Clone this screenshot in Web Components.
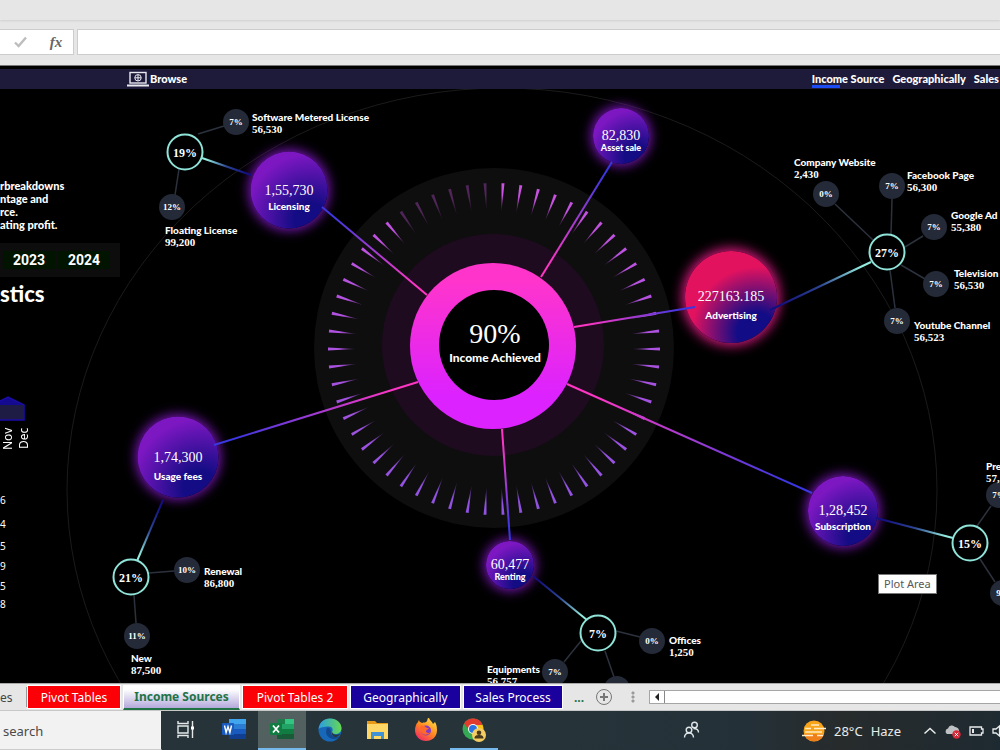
<!DOCTYPE html>
<html lang="en">
<head>
<meta charset="utf-8">
<title>Income Sources</title>
<style>
  body {
    margin: 0;
    height: 100vh;
    display: flex;
    flex-direction: column;
    overflow: hidden;
    background: #000;
    font-family: "Noto Sans", "Open Sans", sans-serif;
  }
  income-board { flex: 1; min-height: 0; }
</style>
</head>
<body>
<formula-bar></formula-bar>
<income-board>
  <board-nav slot="nav"></board-nav>
  <side-panel slot="panel"></side-panel>
  <income-map slot="map"></income-map>
</income-board>
<sheet-tabs></sheet-tabs>
<task-bar></task-bar>

<script>
function mount(el, html) {
  el.attachShadow({ mode: "open" }).innerHTML = html;
}

class FormulaBar extends HTMLElement {
  connectedCallback() {
    mount(this, `
      <style>
        :host { display: block; background: #e6e6e6; border-bottom: 1px solid #777; }
        .ribbon { height: 20px; box-shadow: 0 1px 2px #cfcfcf; }
        .row { display: flex; gap: 3px; padding: 9px 0 10px; }
        .tools {
          box-sizing: border-box; width: 74px; height: 26px;
          display: flex; align-items: center; justify-content: flex-end; gap: 16px;
          padding-right: 7px; background: #fff; border: 1px solid #cdcdcd; border-left: 0;
        }
        button {
          border: 0; padding: 0; background: none; width: 20px; height: 20px;
          font: italic bold 15px/20px "Liberation Serif", serif; color: #666;
        }
        button svg { display: block; margin: 4px; }
        input {
          flex: 1; min-width: 0; box-sizing: border-box; height: 26px;
          border: 1px solid #cdcdcd; border-right: 0; background: #fff; padding: 0 8px;
        }
      </style>
      <div class="ribbon"></div>
      <div class="row">
        <div class="tools">
          <button aria-label="Enter"><svg width="13" height="12" viewBox="0 0 13 12"><path d="M1 6.5 4.6 10 12 1.5" fill="none" stroke="#bdbdbd" stroke-width="2.4"/></svg></button>
          <button aria-label="Insert function">fx</button>
        </div>
        <input aria-label="Formula">
      </div>
    `);
  }
}

class IncomeBoard extends HTMLElement {
  connectedCallback() {
    mount(this, `
      <style>
        :host { display: flex; flex-direction: column; background: #000; color: #fff; padding-top: 3px; }
        .stage { flex: 1; min-height: 0; display: grid; overflow: hidden; }
        ::slotted([slot="map"]), ::slotted([slot="panel"]) { grid-area: 1 / 1; }
        ::slotted([slot="panel"]) { justify-self: start; }
      </style>
      <slot name="nav"></slot>
      <div class="stage">
        <slot name="map"></slot>
        <slot name="panel"></slot>
      </div>
    `);
  }
}

class BoardNav extends HTMLElement {
  connectedCallback() {
    mount(this, `
      <style>
        :host {
          display: flex; align-items: center; height: 20px; padding-left: 127px;
          background: #1e1b3a; font: 900 11px/18px Lato, sans-serif; overflow: hidden;
        }
        a { color: #fff; text-decoration: none; white-space: nowrap; }
        .browse { display: flex; align-items: center; }
        nav { display: flex; gap: 8px; margin-left: auto; padding-right: 1px; }
        .active { background: linear-gradient(#1d4df2, #1d4df2) left bottom / 28px 3px no-repeat; }
      </style>
      <a class="browse" href="#">
        <svg width="23" height="16" viewBox="0 0 23 16" fill="none" stroke="#e8e8f0">
          <rect x="3" y="1.5" width="16" height="10.5" stroke-width="1.4"/>
          <path d="M0 14.5h22" stroke-width="2"/>
          <circle cx="11" cy="6.8" r="3.2"/><path d="M7.8 6.8h6.4M11 3.6v6.4"/>
        </svg>
        Browse
      </a>
      <nav>
        <a class="active" href="#">Income Source</a>
        <a href="#">Geographically</a>
        <a href="#">Sales</a>
      </nav>
    `);
  }
}

class SidePanel extends HTMLElement {
  connectedCallback() {
    mount(this, `
      <style>
        :host { display: block; width: 120px; padding-top: 90px; font-family: Lato, sans-serif; }
        p { margin: 0; font-weight: 900; font-size: 11px; line-height: 13px; white-space: nowrap; }
        .years {
          display: flex; gap: 3px; align-items: center; margin-top: 12px; height: 34px;
          padding-left: 3px; background: #0d0d0d;
        }
        .years button {
          width: 52px; height: 18px; border: 0; padding: 0; background: #001400; color: #fff;
          font: bold 14px/18px Roboto, sans-serif;
        }
        h2 { margin: 2px 0 0; font-size: 22px; line-height: 30px; font-weight: 900; }
        .trend { margin-top: 87px; display: block; }
        .months { display: flex; margin-top: 6px; font: 12px/16px "Noto Sans", sans-serif; }
        .months span { writing-mode: vertical-rl; transform: rotate(180deg); height: 24px; text-align: right; }
        ul {
          list-style: none; margin: 41px 0 0; padding: 0; font: 10px/14px "Noto Sans", sans-serif;
          display: grid; grid-template-rows: 24px 22px 20px 20px 18px 18px;
        }
      </style>
      <p>rbreakdowns<br>ntage and<br>rce.<br>ating profit.</p>
      <div class="years"><button>2023</button><button>2024</button></div>
      <h2>stics</h2>
      <svg class="trend" width="26" height="26" viewBox="0 0 26 26">
        <path d="M0 5 8 1l16 8v15H0z" fill="#1e1b45"/>
        <path d="M0 5 8 1l16 8H0z" fill="#130a8f"/>
        <path d="M0 5 8 1l16 8v15H0" fill="none" stroke="#1b0ca8" stroke-width="1.5"/>
      </svg>
      <div class="months"><span>Nov</span><span>Dec</span></div>
      <ul><li>6</li><li>4</li><li>5</li><li>9</li><li>5</li><li>8</li></ul>
    `);
  }
}

// a glowing income bubble: amount in the middle, name under it
class IncomeBubble extends HTMLElement {
  connectedCallback() {
    mount(this, `
      <style>
        :host {
          position: absolute; transform: translate(-50%, -50%);
          box-sizing: border-box; border-radius: 50%;
          display: grid; grid-template-rows: 1fr auto 1fr; justify-items: center;
          background: radial-gradient(circle at 78% 88%, #140c84 18%, #7c17c2 72%);
          box-shadow: 0 0 12px 2px #7a16b8; white-space: nowrap;
        }
        :host([hot]) {
          background: radial-gradient(circle at 78% 88%, #120c86 18%, #e2125f 60%);
          box-shadow: 0 0 12px 3px #d0187c;
        }
        .amount { grid-row: 2; font: 14px/18px "Liberation Serif", serif; }
        .name { grid-row: 3; font: 900 10px/12px Lato, sans-serif; }
        :host([small]) .amount { line-height: 14px; }
        :host([small]) .name { font-size: 9px; line-height: 10px; }
        :host([roomy]) .name { padding-top: 3px; }
      </style>
      <span class="amount"><slot></slot></span>
      <span class="name">${this.getAttribute("name")}</span>
    `);
  }
}

class ShareNode extends HTMLElement {
  connectedCallback() {
    mount(this, `
      <style>
        :host {
          position: absolute; transform: translate(-50%, -50%);
          box-sizing: border-box; width: 26px; height: 26px; border-radius: 50%;
          display: grid; place-items: center; background: #242a37;
          font: bold 9px/12px "Liberation Serif", serif;
        }
        :host([hub]) { width: 37px; height: 37px; border: 2px solid #8fe3d8; background: #000; font-size: 12px; }
      </style>
      <slot></slot>
    `);
  }
}

class SourceLabel extends HTMLElement {
  connectedCallback() {
    mount(this, `
      <style>
        :host { position: absolute; white-space: nowrap; font: 900 10px/12px Lato, sans-serif; }
        .value { display: block; font: bold 11px/12px "Liberation Serif", serif; }
      </style>
      <span>${this.getAttribute("name")}</span>
      <span class="value"><slot></slot></span>
    `);
  }
}

// the map's plane starts this far down the window
const TOP = 89;

const BUBBLES = [
  [289, 190, 77, "Licensing", "1,55,730", ""],
  [621, 136, 56, "Asset sale", "82,830", "small"],
  [731, 297, 92, "Advertising", "227163.185", "hot roomy"],
  [843, 511, 70, "Subscription", "1,28,452", ""],
  [510, 565, 48, "Renting", "60,477", "small"],
  [178, 457, 81, "Usage fees", "1,74,300", "roomy"],
];

const HUBS = [
  [185, 152, "19%"], [887, 252, "27%"], [131, 577, "21%"], [598, 633, "7%"], [970, 543, "15%"],
];

const LEAVES = [
  [236, 122, "7%"], [172, 207, "12%"], [826, 194, "0%"], [892, 186, "7%"], [934, 227, "7%"],
  [936, 284, "7%"], [897, 321, "7%"], [187, 570, "10%"], [137, 636, "11%"], [652, 641, "0%"],
  [555, 672, "7%"], [617, 689, ""], [999, 495, "7%"], [1003, 593, "9%"],
];

const LABELS = [
  [252, 111, "Software Metered License", "56,530"],
  [165, 224, "Floating License", "99,200"],
  [794, 156, "Company Website", "2,430"],
  [907, 169, "Facebook Page", "56,300"],
  [951, 209, "Google Ad", "55,380"],
  [954, 267, "Television .", "56,530"],
  [914, 319, "Youtube Channel", "56,523"],
  [204, 565, "Renewal", "86,800"],
  [131, 652, "New", "87,500"],
  [669, 634, "Offices", "1,250"],
  [487, 663, "Equipments", "56,757"],
  [986, 460, "Pre", "57,"],
];

const SPOKES = [
  [427, 295, 322, 207], [541, 277, 612, 162], [574, 327, 695, 307],
  [567, 384, 812, 493], [502, 429, 510, 540], [418, 382, 214, 445],
];

const BRANCHES = [
  [251, 175, 202, 158], [770, 310, 871, 262], [876, 518, 953, 538],
  [533, 576, 587, 620], [163, 500, 137, 561],
];

const TWIGS = [
  [198, 134, 224, 126], [179, 169, 175, 195], [873, 240, 835, 204], [891, 235, 892, 199],
  [905, 247, 923, 236], [901, 265, 925, 279], [890, 270, 895, 308], [149, 573, 174, 571],
  [134, 595, 136, 623], [616, 631, 640, 637], [581, 641, 564, 662], [605, 651, 614, 677],
  [977, 526, 991, 506], [980, 559, 995, 582],
];

class IncomeMap extends HTMLElement {
  connectedCallback() {
    mount(this, `
      <style>
        :host { display: block; position: relative; overflow: hidden; }
        svg { position: absolute; inset: 0; width: 100%; height: 100%; }
        .total {
          position: absolute; left: 495px; top: 230px; transform: translateX(-50%);
          text-align: center; white-space: nowrap;
        }
        .total b { display: block; font: 28px/30px "Liberation Serif", serif; }
        .total span { display: block; font: 900 12px/18px Lato, sans-serif; }
        .tip {
          position: absolute; left: 878px; top: 485px; padding: 0 5px;
          font-size: 11px; line-height: 18px; color: #575757; background: #fff; border: 1px solid #767676;
        }
      </style>
      <svg>
        <defs>
          <linearGradient id="ring" x1="0" y1="0" x2="0" y2="1">
            <stop offset=".1" stop-color="#ff35cb"/><stop offset=".8" stop-color="#dc22ff"/>
          </linearGradient>
        </defs>
        <g transform="translate(0 ${-TOP})">
          <ellipse cx="502" cy="490" rx="435" ry="402" fill="none" stroke="#1b1b1b"/>
          <circle cx="494" cy="348" r="180" fill="#0e0e0e"/>
          <circle cx="493" cy="345" r="111" fill="#1f0b20"/>
          ${this.ticks()}
          <circle cx="493" cy="346" r="83" fill="url(#ring)"/>
          <circle cx="494" cy="345" r="55" fill="#000"/>
        </g>
      </svg>
      ${BUBBLES.map(([x, y, d, name, value, flags]) =>
        `<income-bubble ${flags} name="${name}" style="left:${x}px;top:${y - TOP}px;width:${d}px;height:${d}px">${value}</income-bubble>`).join("")}
      <svg>
        <g transform="translate(0 ${-TOP})">
          ${TWIGS.map(([a, b, c, d]) => `<path d="M${a} ${b}L${c} ${d}" stroke="#2c323d" stroke-width="1.5"/>`).join("")}
          ${SPOKES.map((p, i) => this.line(p, "s" + i, ["#ff36c4", "#a23bd0", "#3a36e0"], 2)).join("")}
          ${BRANCHES.map((p, i) => this.line(p, "b" + i, ["#130f80", "#2c4592", "#93ecdf"], 2)).join("")}
        </g>
      </svg>
      ${HUBS.map(([x, y, t]) => `<share-node hub style="left:${x}px;top:${y - TOP}px">${t}</share-node>`).join("")}
      ${LEAVES.map(([x, y, t]) => `<share-node style="left:${x}px;top:${y - TOP}px">${t}</share-node>`).join("")}
      ${LABELS.map(([x, y, name, value]) =>
        `<source-label name="${name}" style="left:${x}px;top:${y - TOP}px">${value}</source-label>`).join("")}
      <div class="total"><b>90%</b><span>Income Achieved</span></div>
      <div class="tip" role="tooltip">Plot Area</div>
    `);
  }

  line([x1, y1, x2, y2], id, [from, mid, to], width) {
    return `
      <linearGradient id="${id}" gradientUnits="userSpaceOnUse" x1="${x1}" y1="${y1}" x2="${x2}" y2="${y2}">
        <stop offset=".1" stop-color="${from}"/><stop offset=".5" stop-color="${mid}"/><stop offset=".9" stop-color="${to}"/>
      </linearGradient>
      <path d="M${x1} ${y1}L${x2} ${y2}" stroke="url(#${id})" stroke-width="${width}"/>`;
  }

  // wedge marks round the dial; the last few before noon are unlit
  ticks() {
    let out = `
      <radialGradient id="fade" gradientUnits="userSpaceOnUse" cx="0" cy="0" r="166">
        <stop offset=".84" stop-color="#fff" stop-opacity=".25"/><stop offset=".93" stop-color="#fff"/>
      </radialGradient>
      <mask id="dial" maskUnits="userSpaceOnUse" x="-170" y="-170" width="340" height="340">
        <circle r="168" fill="url(#fade)"/>
      </mask>
      <g transform="translate(494 349)" mask="url(#dial)">`;
    const count = 58;
    for (let i = 0; i < count; i++) {
      const angle = (i * 360) / count;
      const up = Math.sin((angle * Math.PI) / 180);
      const hue = 278 + up * 12;
      const unlit = i >= 15 && i <= 20;
      out += `<path transform="rotate(${-angle})" d="M138 0 166-1.5v3z" fill="hsl(${hue} 70% 60%)" opacity="${unlit ? 0.35 : 1}"/>`;
    }
    return out + "</g>";
  }
}

class SheetTabs extends HTMLElement {
  connectedCallback() {
    mount(this, `
      <style>
        :host {
          display: flex; align-items: center; box-sizing: border-box; height: 28px; overflow: hidden;
          background: #e6e6e6; border-top: 1px solid #a8a8a8; border-bottom: 1px solid #c8c8c8;
          font-size: 12px;
        }
        button { border: 0; padding: 0; background: none; font: inherit; color: inherit; white-space: nowrap; }
        .tab { height: 24px; box-sizing: border-box; border: 1px solid #fff; color: #fff; margin-right: 2px; text-align: center; }
        .cut { width: 27px; color: #444; text-align: left; height: 20px; border-right: 1px solid #999; }
        .red { background: #fb0007; width: 94px; }
        .red.wide { width: 106px; }
        .blue { background: #1a009c; width: 111px; }
        .blue.last { width: 100px; }
        .on {
          width: 117px; height: 25px; color: #217346; font-weight: bold; margin-right: 2px;
          background: linear-gradient(#fff 15%, #b4a9dc); border: 1px solid #fff; border-bottom: 2px solid #217346;
          box-sizing: border-box;
        }
        .more { color: #217346; font-weight: bold; width: 24px; margin-left: 2px; }
        .add { width: 18px; height: 18px; margin: 0 18px 0 4px; }
        .grip { width: 4px; height: 12px; background: radial-gradient(circle, #999 1px, transparent 2px) 0 0 / 4px 4px; }
        .scroll { flex: 1; display: flex; height: 12px; margin-left: 14px; border: 1px solid #a5a5a5; border-right: 0; background: #fff; }
        .scroll button { width: 15px; border-right: 1px solid #888; }
        svg { display: block; }
      </style>
      <button class="cut">es</button>
      <button class="tab red">Pivot Tables</button>
      <button class="on">Income Sources</button>
      <button class="tab red wide">Pivot Tables 2</button>
      <button class="tab blue">Geographically</button>
      <button class="tab blue last">Sales Process</button>
      <button class="more">...</button>
      <button class="add" aria-label="New sheet"><svg width="18" height="18" viewBox="0 0 18 18" fill="none" stroke="#777"><circle cx="9" cy="9" r="7.5"/><path d="M9 5v8M5 9h8" stroke-width="2"/></svg></button>
      <span class="grip"></span>
      <div class="scroll"><button aria-label="Scroll left"><svg width="14" height="12"><path d="M9 2v8L5 6z" fill="#222"/></svg></button></div>
    `);
  }
}

const ICONS = {
  view: `<g fill="none" stroke="#e4e8e8" stroke-width="1.4"><path d="M4 3v2.5h10V3M4 20v-2.5h10V20M4 8h10v7H4zM18.5 3v17"/><path d="M17 8.5h3v3h-3z" fill="#fff" stroke="none"/></g>`,
  word: `<path d="M7 1h17v20H7z" fill="#2b7cd3"/><path d="M7 1h17v5H7z" fill="#41a5ee"/><path d="M7 11h17v5H7z" fill="#185abd"/><path d="M7 16h17v5H7z" fill="#103f91"/><rect x="0" y="5" width="12" height="12" rx="1" fill="#185abd"/><path d="m2.5 7.5 1.6 7 1.9-6 1.9 6 1.6-7" fill="none" stroke="#fff" stroke-width="1.4"/>`,
  excel: `<path d="M7 1h17v20H7z" fill="#21a366"/><path d="M7 1h8v5H7z" fill="#1b7d4a"/><path d="M15 1h9v5h-9z" fill="#33c481"/><path d="M7 11h17v10H7z" fill="#107c41"/><path d="M7 16h17v5H7z" fill="#185c37"/><rect x="0" y="5" width="12" height="12" rx="1" fill="#107c41"/><path d="m3 7.500 6 7m0-7-6 7" stroke="#fff" stroke-width="1.8"/>`,
  edge: `<defs><linearGradient id="e" x2="1"><stop stop-color="#2a9fe0"/><stop offset="1" stop-color="#66d854"/></linearGradient></defs>
    <circle cx="12" cy="12" r="11.5" fill="#1768b8"/><path d="M.6 11C1.500 4 6 .5 12 .5c7 0 11.500 5 11.500 9.500 0 4-3 6-6 6-2.500 0-4-1-3.500-2 1.500-2 .5-5.500-3-5.500C6 8.500 2 9.500.6 11z" fill="url(#e)"/><path d="M9 10c-3 5 1 11 7 11 3 0 5-1 6-3-4 2-9 1-9-4 0-3-2-5-4-4z" fill="#124a91"/><path d="M14 14c1 3 5 3.500 8.500 2-1 1.500-3 3-5 3-2.500 0-4-2.500-3.500-5z" fill="#26363d"/>`,
  folder: `<path d="M1 3h8l2 2h11v4H1z" fill="#e79a19"/><path d="M1 6h21v15H1z" fill="#ffd766"/><path d="M5 21v-7h13v7h-3v-3H8v3z" fill="#3f92d3"/>`,
  firefox: `<defs><linearGradient id="f" x1=".9" y1="0" x2=".2" y2="1"><stop stop-color="#ffe64b"/><stop offset=".5" stop-color="#ff8a1e"/><stop offset="1" stop-color="#f0256a"/></linearGradient></defs>
    <path d="M3 5c1 0 1-2 2-3 0 2 2 2 3 3 2-1 4 0 5-2s0-3 2-3c1 3 3 3 4 6l2-2c2 3 2 7 2 8 0 7-5 11-11 11S1 18.500 1 12c0-3 1-5 2-7z" fill="url(#f)"/><circle cx="12" cy="12.5" r="5" fill="#8339c8"/><path d="M6 8c3-1 5 0 6 1.500l3 1c-1 1-3 1-3 3 0 1 2 2 4 1-2 3-8 3-9-1-.5-2-1-3-1-5.500z" fill="#ff6a2b"/>`,
  chrome: `<circle cx="11" cy="11" r="10.5" fill="#34a853"/><path d="M2 5.500a10.500 10.500 0 0 1 18.600 1.500H11L7 12z" fill="#e33b2e"/><path d="M20.600 7A10.500 10.500 0 0 1 11 21.500L15.500 12 14 7z" fill="#fbc116"/><circle cx="11" cy="11" r="5" fill="#fff"/><circle cx="11" cy="11" r="4" fill="#2a73e0"/><circle cx="17" cy="17" r="7" fill="#f4cc62"/><circle cx="17" cy="14.7" r="2.3" fill="#4a3a1c"/><path d="M12.500 20.500c0-3 2-3.500 4.500-3.500s4.500.5 4.500 3.500z" fill="#4a3a1c"/>`,
  people: `<g fill="none" stroke="#dfe6e8" stroke-width="1.4"><circle cx="9" cy="12" r="2.8"/><path d="M4.500 19.500c0-6 9-6 9 0"/><circle cx="14.5" cy="7" r="2.8"/><path d="M13.500 10.500c3 0 5 1 5 4"/></g>`,
  haze: `<circle cx="12" cy="12" r="10.5" fill="#f8a31c"/><path d="M2 15h20a10.500 10.500 0 0 1-20 0z" fill="#ee7f1a"/><path d="M9 6h8M12 9.500h12M3 9.500h6M3 13h17M0 16.500h11M15 16.500h6" stroke="#ffedc4" stroke-width="1.5"/>`,
};

class AppButton extends HTMLElement {
  connectedCallback() {
    mount(this, `
      <style>
        :host { display: block; width: 48px; }
        button { width: 100%; height: 100%; border: 0; padding: 0; background: none; display: grid; place-items: center; box-sizing: border-box; border-bottom: 2px solid transparent; }
        :host([running]) button { border-color: #76b9ed; }
        :host([active]) button { background: #52605f; border-color: #76b9ed; }
        svg { display: block; }
      </style>
      <button aria-label="${this.getAttribute("icon")}">
        <svg width="24" height="24" viewBox="0 0 24 24">${ICONS[this.getAttribute("icon")]}</svg>
      </button>
    `);
  }
}

class TaskBar extends HTMLElement {
  connectedCallback() {
    mount(this, `
      <style>
        :host {
          display: flex; height: 39px; overflow: hidden; color: #e8ecec; font-size: 13px;
          background: linear-gradient(90deg, #26343a 0 55%, #243037 75%, #272b2c 84%, #1e2a31);
        }
        input {
          box-sizing: border-box; width: 162px; border: 0; border-right: 1px solid #26343a;
          border-bottom: 1px solid #ccc; background: #f2f2f2; padding: 2px 3px 0; font: inherit;
        }
        input::placeholder { color: #4a4a4a; opacity: 1; }
        .people { margin-left: auto; }
        .weather { display: flex; align-items: center; gap: 8px; margin-left: 86px; white-space: nowrap; }
        .tray { display: flex; align-items: center; gap: 8px; margin-left: 22px; }
        svg { display: block; }
      </style>
      <input placeholder="search" aria-label="search">
      <app-button icon="view"></app-button>
      <app-button icon="word"></app-button>
      <app-button icon="excel" active></app-button>
      <app-button icon="edge"></app-button>
      <app-button icon="folder"></app-button>
      <app-button icon="firefox"></app-button>
      <app-button icon="chrome" running></app-button>
      <app-button class="people" icon="people"></app-button>
      <div class="weather">
        <svg width="24" height="24" viewBox="0 0 24 24">${ICONS.haze}</svg>
        <span>28°C</span><span>Haze</span>
      </div>
      <div class="tray">
        <svg width="14" height="14" viewBox="0 0 14 14"><path d="m1.500 9.500 5.500-5 5.500 5" fill="none" stroke="#e8ecec" stroke-width="1.5"/></svg>
        <svg width="16" height="16" viewBox="0 0 16 16"><path d="M2 11a3 3 0 0 1 1-5.500 4 4 0 0 1 7-1.500 4 4 0 0 1 4 5v2z" fill="#bfc2c4"/><circle cx="11.5" cy="11.5" r="4.2" fill="#d8293a"/><path d="m9.800 9.800 3.400 3.400m0-3.400-3.400 3.400" stroke="#fff"/></svg>
        <svg width="15" height="12" viewBox="0 0 15 12"><path d="M1 2h11.500v2H14v4h-1.500v2H1z" fill="none" stroke="#e8ecec" stroke-width="1.3"/><path d="M3 4h2v4H3z" fill="#e8ecec"/></svg>
        <svg width="8" height="14" viewBox="0 0 8 14"><path d="M7.500 2 4 5H1v4h3l3.500 3z" fill="none" stroke="#e8ecec" stroke-width="1.3"/></svg>
      </div>
    `);
  }
}

customElements.define("formula-bar", FormulaBar);
customElements.define("board-nav", BoardNav);
customElements.define("side-panel", SidePanel);
customElements.define("income-bubble", IncomeBubble);
customElements.define("share-node", ShareNode);
customElements.define("source-label", SourceLabel);
customElements.define("income-map", IncomeMap);
customElements.define("income-board", IncomeBoard);
customElements.define("sheet-tabs", SheetTabs);
customElements.define("app-button", AppButton);
customElements.define("task-bar", TaskBar);
</script>
</body>
</html>
